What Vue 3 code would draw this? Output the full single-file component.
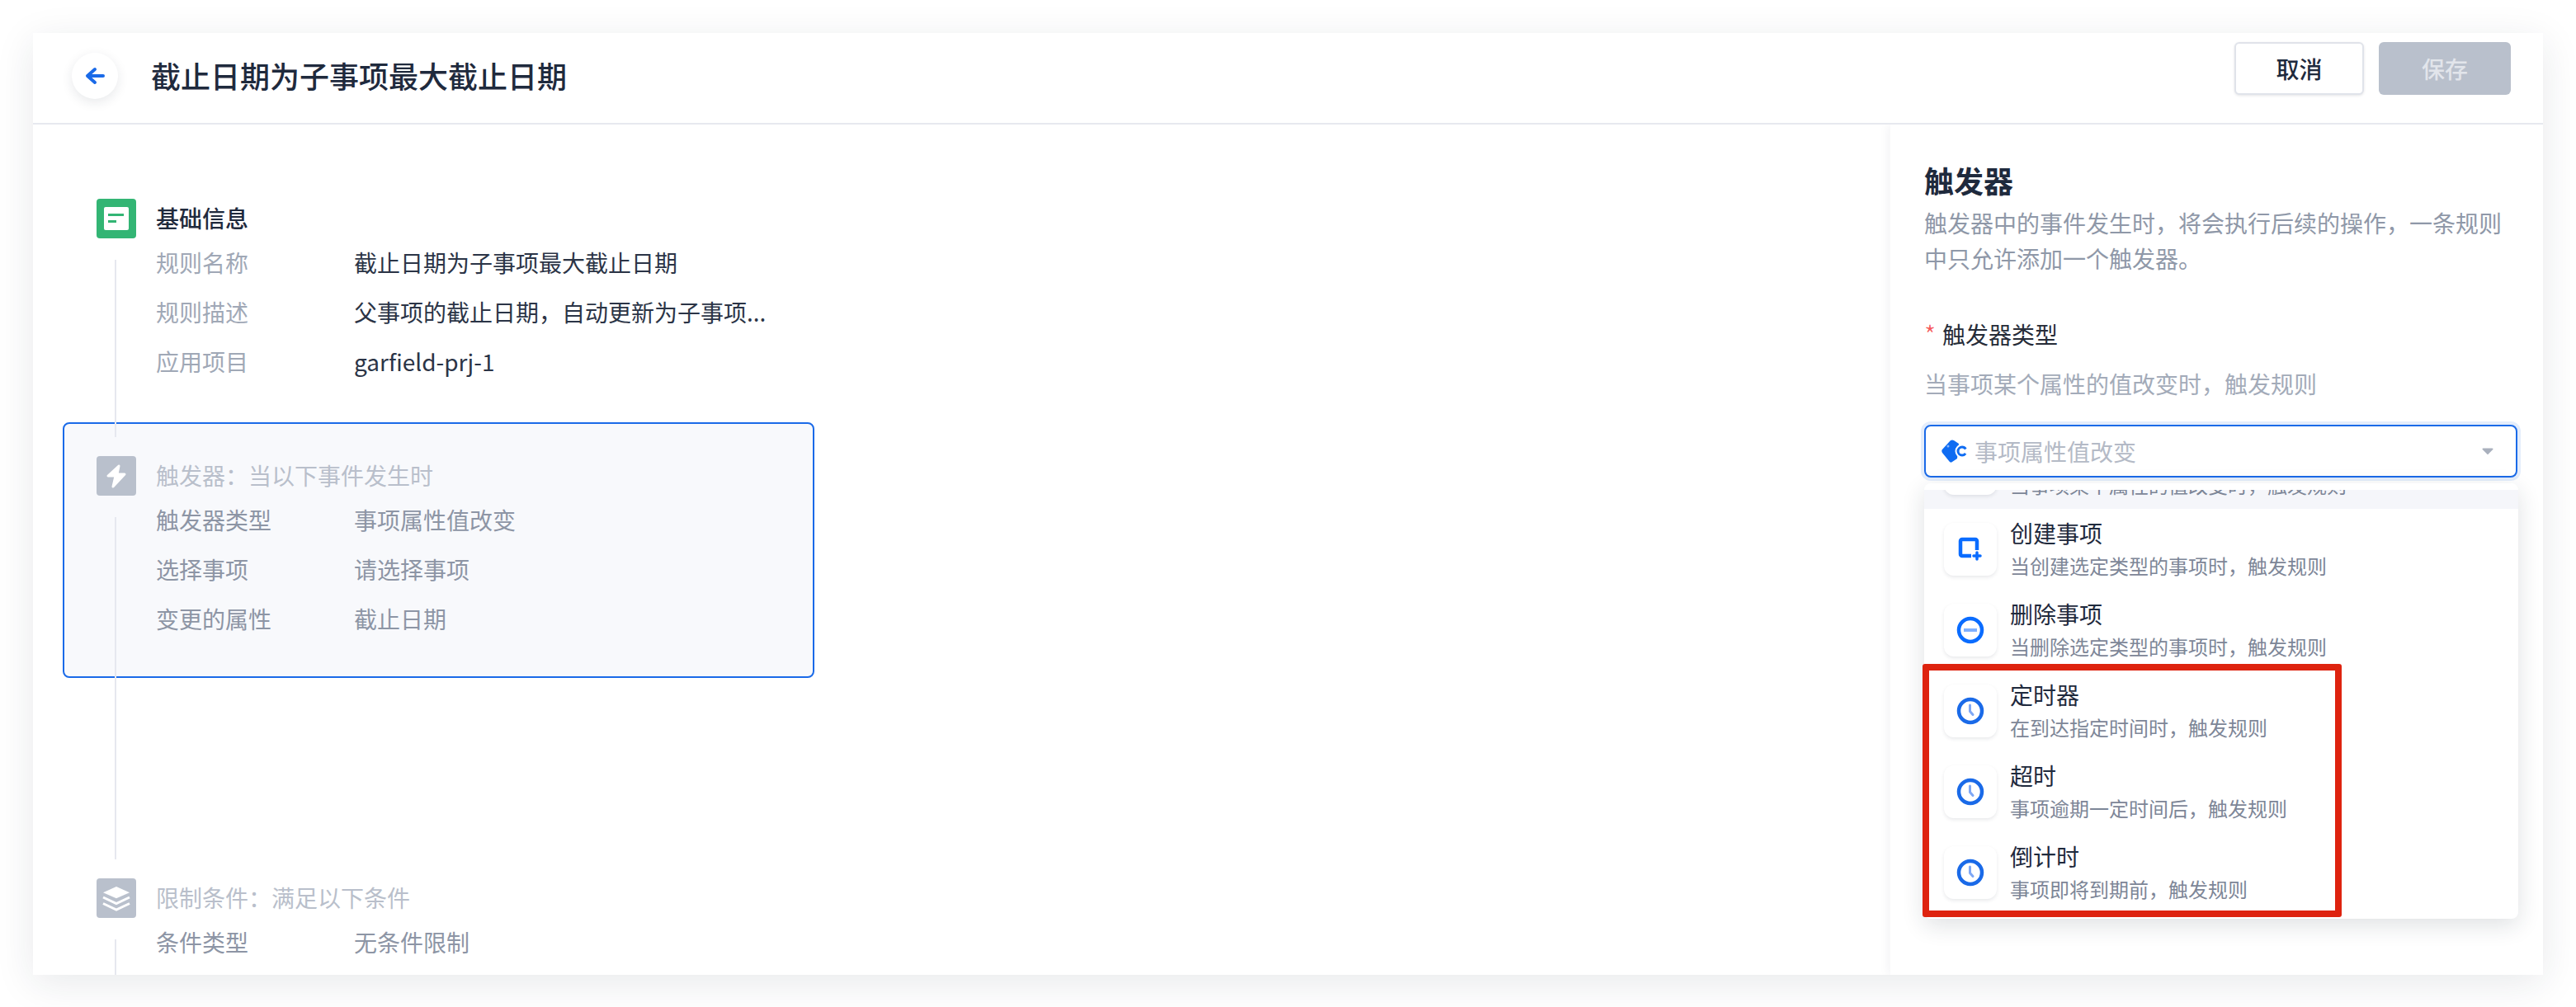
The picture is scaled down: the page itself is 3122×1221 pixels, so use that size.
<script setup>
const basicRows = [
  { label: '规则名称', value: '截止日期为子事项最大截止日期' },
  { label: '规则描述', value: '父事项的截止日期，自动更新为子事项...' },
  { label: '应用项目', value: 'garfield-prj-1' }
]

const triggerRows = [
  { label: '触发器类型', value: '事项属性值改变' },
  { label: '选择事项', value: '请选择事项' },
  { label: '变更的属性', value: '截止日期' }
]

const conditionRows = [{ label: '条件类型', value: '无条件限制' }]

const options = [
  { title: '事项属性值改变', desc: '当事项某个属性的值改变时，触发规则', icon: 'none', active: true },
  { title: '创建事项', desc: '当创建选定类型的事项时，触发规则', icon: 'create' },
  { title: '删除事项', desc: '当删除选定类型的事项时，触发规则', icon: 'remove' },
  { title: '定时器', desc: '在到达指定时间时，触发规则', icon: 'clock' },
  { title: '超时', desc: '事项逾期一定时间后，触发规则', icon: 'clock' },
  { title: '倒计时', desc: '事项即将到期前，触发规则', icon: 'clock' }
]
</script>

<template>
  <div class="page">
    <div class="card">
      <header class="header">
        <button class="back" type="button" aria-label="返回">
          <svg width="56" height="56" viewBox="0 0 56 56" fill="none" stroke="#1a6ae8" stroke-width="4" stroke-linecap="round" stroke-linejoin="round">
            <path d="M19 28h19M28 20l-9 8 9 8" />
          </svg>
        </button>
        <h1 class="rule-title">截止日期为子事项最大截止日期</h1>
        <div class="actions">
          <button class="btn btn-cancel" type="button">取消</button>
          <button class="btn btn-save" type="button">保存</button>
        </div>
      </header>

      <div class="body">
        <main class="flow">
          <section class="step">
            <div class="step-head">
              <span class="step-icon green">
                <svg width="48" height="48" viewBox="0 0 48 48">
                  <rect x="9" y="10" width="30" height="28" rx="2" fill="#fff" />
                  <rect x="14" y="18" width="19" height="3" fill="#33b574" />
                  <rect x="14" y="26" width="10" height="3" fill="#33b574" />
                </svg>
              </span>
              <span class="step-title">基础信息</span>
            </div>
            <div v-for="row in basicRows" :key="row.label" class="row">
              <span class="row-label">{{ row.label }}</span>
              <span class="row-value">{{ row.value }}</span>
            </div>
          </section>

          <section class="step step-active">
            <div class="step-head">
              <span class="step-icon">
                <svg width="48" height="48" viewBox="0 0 48 48" fill="#fff" stroke="#fff" stroke-width="3" stroke-linejoin="round">
                  <path d="M27 12 14 24h9l-3 13 14-15h-9z" />
                </svg>
              </span>
              <span class="step-title">触发器：当以下事件发生时</span>
            </div>
            <div v-for="row in triggerRows" :key="row.label" class="row">
              <span class="row-label">{{ row.label }}</span>
              <span class="row-value">{{ row.value }}</span>
            </div>
          </section>

          <section class="step step-muted">
            <div class="step-head">
              <span class="step-icon">
                <svg width="48" height="48" viewBox="0 0 48 48" fill="none" stroke="#fff" stroke-width="3">
                  <path d="m24 10 16 7.300-16 7-16-7z" fill="#fff" stroke="none" />
                  <path d="m8 23 16 7.500L40 23M8 30.500 24 38l16-7.500" />
                </svg>
              </span>
              <span class="step-title">限制条件：满足以下条件</span>
            </div>
            <div v-for="row in conditionRows" :key="row.label" class="row">
              <span class="row-label">{{ row.label }}</span>
              <span class="row-value">{{ row.value }}</span>
            </div>
          </section>
        </main>

        <aside class="panel">
          <h2 class="panel-title">触发器</h2>
          <p class="panel-desc">触发器中的事件发生时，将会执行后续的操作，一条规则中只允许添加一个触发器。</p>
          <div class="field-label"><span class="required">*</span>触发器类型</div>
          <div class="field-hint">当事项某个属性的值改变时，触发规则</div>

          <div class="select-wrap">
            <div class="select">
              <svg class="select-icon" width="33" height="28" viewBox="0 0 33 28">
                <path d="M0.500 12.500 10.500 1.500Q12.500 0 15 1L21 5 19 23 13 27Q11 28.500 9.500 26.500L1 16Q0 14.500 0.500 12.500z" fill="#0f6cf2" />
                <circle cx="8" cy="8" r="1.500" fill="#8ab6fb" />
                <circle cx="25" cy="14" r="8.500" fill="#fff" />
                <circle cx="25" cy="14" r="5" fill="none" stroke="#0f6cf2" stroke-width="3" stroke-dasharray="25 6" stroke-dashoffset="-3" />
              </svg>
              <span class="select-text">事项属性值改变</span>
              <svg class="select-arrow" width="14" height="8" viewBox="0 0 14 8">
                <path d="M1.500 0.500h11a1 1 0 0 1 .8 1.600L7.800 7.400a1 1 0 0 1-1.600 0L.7 2.100A1 1 0 0 1 1.500 .5z" fill="#a9b0bd" />
              </svg>
            </div>

            <div class="dropdown">
              <div class="option-scroll">
                <div class="option-list">
                  <div v-for="item in options" :key="item.title" class="option" :class="{ 'option-active': item.active }">
                    <span class="option-icon">
                      <svg width="64" height="64" viewBox="0 0 64 64" fill="none">
                        <template v-if="item.icon === 'create'">
                          <path d="M33 40H22a2 2 0 0 1-2-2V22a2 2 0 0 1 2-2h16a2 2 0 0 1 2 2v11" stroke="#0a6cff" stroke-width="4.500" />
                          <path d="M36 40h8M40 36v8" stroke="#0a6cff" stroke-width="3.500" stroke-linecap="round" />
                        </template>
                        <template v-else-if="item.icon === 'remove'">
                          <circle cx="32" cy="32" r="14" stroke="#0a6cff" stroke-width="4.500" />
                          <path d="M24 32h16" stroke="#7fb0ff" stroke-width="4" />
                        </template>
                        <template v-else-if="item.icon === 'clock'">
                          <circle cx="32" cy="32" r="14" stroke="#1a6ae8" stroke-width="4.500" />
                          <path d="M31.500 25v7.500l3.500 4" stroke="#7fa8f5" stroke-width="3" stroke-linecap="round" stroke-linejoin="round" />
                        </template>
                      </svg>
                    </span>
                    <span class="option-text">
                      <span class="option-title">{{ item.title }}</span>
                      <span class="option-desc">{{ item.desc }}</span>
                    </span>
                  </div>
                </div>
              </div>
              <!-- 标注框 -->
              <div class="mark"></div>
            </div>
          </div>
        </aside>
      </div>
    </div>
  </div>
</template>

<style>
html,
body {
  margin: 0;
  background: #fff;
}
</style>

<style scoped>
.page {
  box-sizing: border-box;
  width: 3122px;
  height: 1221px;
  padding: 40px;
  overflow: hidden;
  background: #fff;
  font-family: "Noto Sans CJK SC", "Liberation Sans", sans-serif;
  color: #1f2a3d;
}

.card {
  display: flex;
  flex-direction: column;
  width: 3042px;
  height: 1142px;
  background: #fff;
  box-shadow: 0 10px 44px rgba(30, 40, 60, 0.1);
}

.header {
  box-sizing: border-box;
  display: flex;
  align-items: center;
  flex: none;
  height: 111px;
  padding: 0 39px 6px 47px;
  border-bottom: 2px solid #e7e9ef;
}

.back {
  flex: none;
  width: 56px;
  height: 56px;
  padding: 0;
  border: none;
  border-radius: 50%;
  background: #fff;
  box-shadow: 0 4px 14px rgba(30, 40, 60, 0.1);
}

.back svg {
  display: block;
}

.rule-title {
  margin: 0 0 2px 40px;
  font-size: 36px;
  line-height: 50px;
  font-weight: 500;
  color: #1f2a3d;
}

.actions {
  display: flex;
  gap: 18px;
  align-self: flex-start;
  margin: 11px 0 0 auto;
}

.btn {
  box-sizing: border-box;
  height: 64px;
  padding: 0;
  border-radius: 6px;
  font-family: inherit;
  font-size: 28px;
  font-weight: 500;
}

.btn-cancel {
  width: 157px;
  border: 2px solid #e0e3ea;
  background: #fff;
  color: #1f2a3d;
  box-shadow: 0 1px 3px rgba(30, 40, 60, 0.12);
}

.btn-save {
  width: 160px;
  border: none;
  background: #b9c0cc;
  color: #e2e5eb;
}

.body {
  display: flex;
  flex: 1;
  min-height: 0;
  overflow: hidden;
}

.flow {
  flex: 1;
  min-width: 0;
  padding: 49px 0 0 36px;
}

.step {
  position: relative;
  box-sizing: border-box;
  width: 911px;
  padding: 39px;
  border: 2px solid transparent;
  border-radius: 8px;
}

.step::before {
  content: "";
  position: absolute;
  z-index: 1;
  left: 61px;
  top: 113px;
  width: 2px;
  height: 215px;
  background: #e6e8ef;
}

.step-active {
  margin-top: 2px;
  border-color: #1a6ae8;
  background: #f8f9fc;
}

.step-active::before {
  height: 415px;
}

.step-muted {
  margin-top: 202px;
}

.step-head {
  display: flex;
  align-items: center;
  height: 48px;
}

.step-icon {
  flex: none;
  width: 48px;
  height: 48px;
  margin-right: 24px;
  border-radius: 4px;
  background: #b9c0cc;
}

.step-icon.green {
  background: #33b574;
}

.step-icon svg {
  display: block;
}

.step-title {
  margin-bottom: 2px;
  font-size: 28px;
  line-height: 46px;
  font-weight: 500;
  color: #1f2a3d;
}

.row {
  display: flex;
  height: 60px;
  padding-left: 72px;
  font-size: 28px;
  line-height: 58px;
}

.row-label {
  flex: none;
  width: 240px;
  color: #a0a8b6;
}

.row-value {
  color: #2b3446;
  white-space: nowrap;
}

.step-active .step-title,
.step-muted .step-title {
  font-weight: 400;
  color: #b9bfcb;
}

.step-active .row-label,
.step-active .row-value,
.step-muted .row-label,
.step-muted .row-value {
  color: #8d95a5;
}

.panel {
  box-sizing: border-box;
  flex: none;
  width: 791px;
  padding: 43px 31px 0 41px;
  background: #fff;
  box-shadow: -2px 0 12px rgba(30, 40, 60, 0.06);
}

.panel-title {
  margin: 0;
  font-size: 36px;
  line-height: 48px;
  padding-bottom: 2px;
  font-weight: 600;
  color: #1f2a3d;
}

.panel-desc {
  margin: 5px 0 0;
  font-size: 28px;
  line-height: 43px;
  color: #8f98a8;
}

.field-label {
  margin-top: 48px;
  font-size: 28px;
  line-height: 44px;
  color: #262c38;
}

.required {
  display: inline-block;
  width: 22px;
  font-size: 32px;
  line-height: 44px;
  font-weight: 300;
  vertical-align: top;
  color: #f5585a;
}

.field-hint {
  margin-top: 16px;
  font-size: 28px;
  line-height: 44px;
  color: #a3abb9;
}

.select-wrap {
  position: relative;
  margin-top: 28px;
}

.select {
  box-sizing: border-box;
  display: flex;
  align-items: center;
  height: 64px;
  padding: 0 27px 0 19px;
  border: 2px solid #1a6ae8;
  border-radius: 8px;
  background: #fff;
  box-shadow: 0 0 0 4px #e4edfb;
}

.select-icon {
  flex: none;
  margin-right: 7px;
}

.select-text {
  flex: 1;
  font-size: 28px;
  line-height: 44px;
  color: #b4bac6;
}

.select-arrow {
  flex: none;
}

.dropdown {
  position: absolute;
  z-index: 2;
  top: 71px;
  left: 0;
  box-sizing: border-box;
  width: 720px;
  height: 528px;
  padding: 8px 0;
  border-radius: 8px;
  background: #fff;
  box-shadow: 0 8px 28px rgba(30, 40, 60, 0.14);
}

.option-scroll {
  height: 512px;
  overflow: hidden;
}

.option-list {
  margin-top: -75px;
}

.option {
  box-sizing: border-box;
  display: flex;
  align-items: center;
  height: 98px;
  padding-left: 24px;
}

.option-active {
  background: #f5f6fa;
}

.option-icon {
  flex: none;
  width: 64px;
  height: 64px;
  margin-right: 16px;
  border-radius: 12px;
  background: #fff;
  box-shadow: 0 2px 4px rgba(30, 40, 60, 0.1);
}

.option-icon svg {
  display: block;
}

.option-text {
  display: flex;
  flex-direction: column;
}

.option-title {
  font-size: 28px;
  line-height: 40px;
  color: #1f2a3d;
}

.option-desc {
  font-size: 24px;
  line-height: 40px;
  color: #7d8697;
}

.mark {
  position: absolute;
  top: 219px;
  left: -2px;
  box-sizing: border-box;
  width: 508px;
  height: 307px;
  border: 8px solid #de230f;
  border-radius: 3px;
}
</style>
